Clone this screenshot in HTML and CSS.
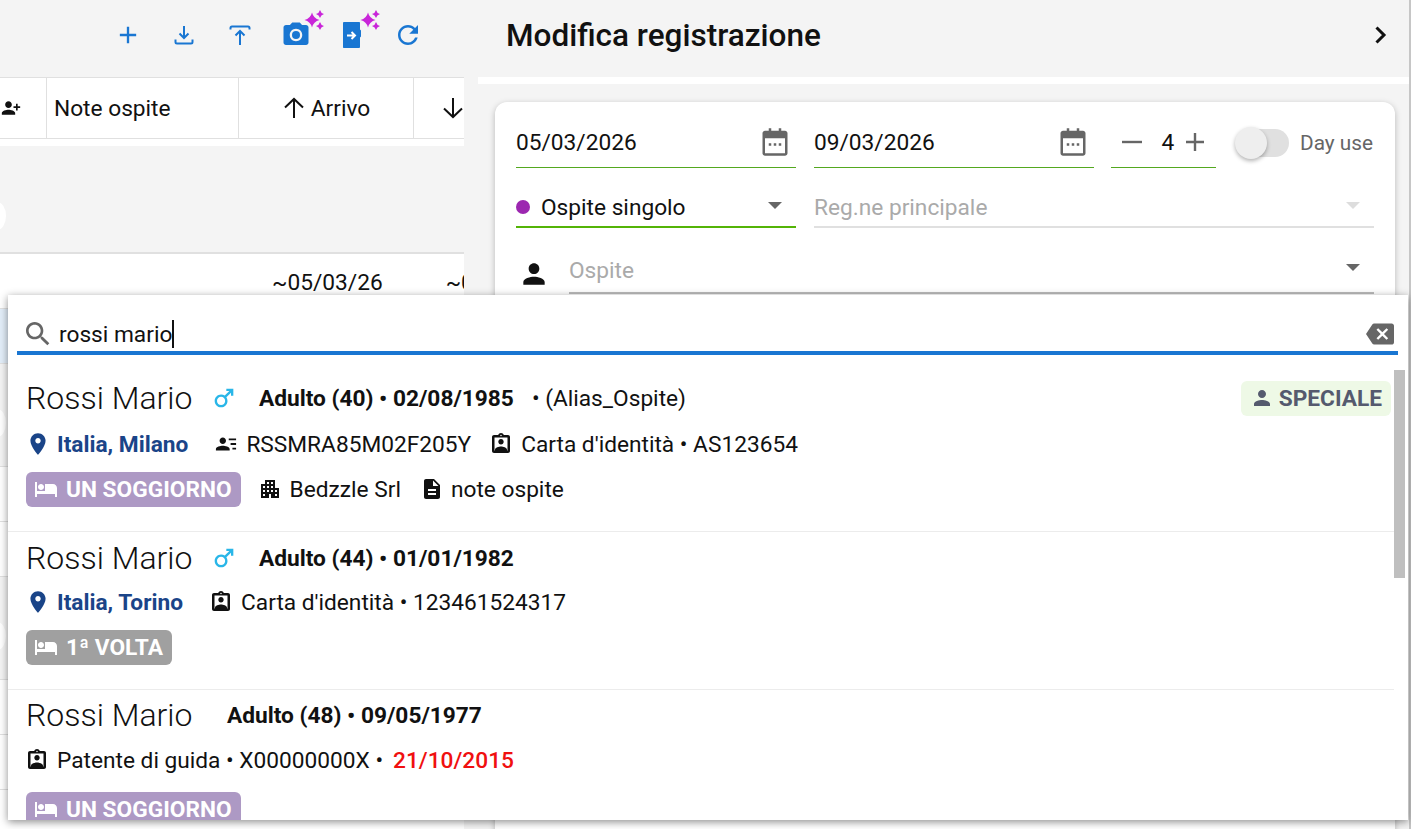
FILE: index.html
```html
<!DOCTYPE html>
<html lang="it">
<head>
<meta charset="utf-8">
<title>Modifica registrazione</title>
<link rel="stylesheet" href="styles.css">
</head>
<body>
<svg class="defs" width="0" height="0" aria-hidden="true">
  <defs>
    <symbol id="i-add" viewBox="0 0 24 24"><path d="M19 13h-6v6h-2v-6H5v-2h6V5h2v6h6v2z"/></symbol>
    <symbol id="i-camera" viewBox="0 0 24 24"><circle cx="12" cy="12" r="3.2"/><path d="M9 2 7.170 4H4c-1.100 0-2 .9-2 2v12c0 1.100.9 2 2 2h16c1.100 0 2-.9 2-2V6c0-1.100-.9-2-2-2h-3.170L15 2H9zm3 15c-2.760 0-5-2.240-5-5s2.240-5 5-5 5 2.240 5 5-2.240 5-5 5z"/></symbol>
    <symbol id="i-refresh" viewBox="0 0 24 24"><path d="M17.650 6.350C16.200 4.900 14.210 4 12 4c-4.420 0-7.990 3.580-7.990 8s3.570 8 7.990 8c3.730 0 6.840-2.550 7.730-6h-2.080c-.82 2.330-3.040 4-5.650 4-3.310 0-6-2.690-6-6s2.690-6 6-6c1.660 0 3.140.69 4.220 1.780L13 11h7V4l-2.350 2.350z"/></symbol>
    <symbol id="i-person" viewBox="0 0 24 24"><path d="M12 12c2.210 0 4-1.790 4-4s-1.790-4-4-4-4 1.790-4 4 1.790 4 4 4zm0 2c-2.670 0-8 1.340-8 4v2h16v-2c0-2.660-5.330-4-8-4z"/></symbol>
    <symbol id="i-person-add" viewBox="0 0 24 24"><path transform="matrix(-1 0 0 1 24 0)" d="M15 12c2.210 0 4-1.790 4-4s-1.790-4-4-4-4 1.790-4 4 1.790 4 4 4zm-9-2V7H4v3H1v2h3v3h2v-3h3v-2H6zm9 4c-2.670 0-8 1.340-8 4v2h16v-2c0-2.660-5.330-4-8-4z"/></symbol>
    <symbol id="i-search" viewBox="0 0 24 24"><path d="M15.500 14h-.79l-.28-.27C15.410 12.590 16 11.110 16 9.500 16 5.910 13.090 3 9.500 3S3 5.910 3 9.500 5.910 16 9.500 16c1.610 0 3.090-.59 4.230-1.570l.27.28v.79l5 4.990L20.490 19l-4.990-5zm-6 0C7.010 14 5 11.990 5 9.500S7.010 5 9.500 5 14 7.010 14 9.500 11.990 14 9.500 14z"/></symbol>
    <symbol id="i-backspace" viewBox="0 0 24 24"><path d="M22 3H7c-.69 0-1.230.35-1.590.88L0 12l5.410 8.110c.36.53.9.89 1.590.89h15c1.100 0 2-.9 2-2V5c0-1.100-.9-2-2-2zm-3 12.590L17.590 17 14 13.410 10.410 17 9 15.590 12.590 12 9 8.410 10.410 7 14 10.590 17.590 7 19 8.410 15.410 12 19 15.590z"/></symbol>
    <symbol id="i-male" viewBox="0 0 24 24"><path d="M9.500 11c1.930 0 3.500 1.570 3.500 3.500S11.430 18 9.500 18 6 16.430 6 14.500 7.570 11 9.500 11zm0-2C6.460 9 4 11.460 4 14.500S6.460 20 9.500 20s5.500-2.460 5.500-5.500c0-1.160-.36-2.250-.97-3.130L18 7.410V10h2V4h-6v2h2.590l-3.960 3.960C11.750 9.360 10.660 9 9.500 9z"/></symbol>
    <symbol id="i-place" viewBox="0 0 24 24"><path d="M12 2C8.130 2 5 5.130 5 9c0 5.250 7 13 7 13s7-7.750 7-13c0-3.870-3.130-7-7-7zm0 9.500c-1.380 0-2.500-1.120-2.500-2.500s1.120-2.500 2.500-2.500 2.500 1.120 2.500 2.500-1.120 2.500-2.500 2.500z"/></symbol>
    <symbol id="i-hotel" viewBox="0 0 24 24"><path d="M7 13c1.660 0 3-1.340 3-3S8.660 7 7 7s-3 1.340-3 3 1.340 3 3 3zm12-6h-8v7H3V5H1v15h2v-3h18v3h2v-9c0-2.210-1.790-4-4-4z"/></symbol>
    <symbol id="i-doc" viewBox="0 0 24 24"><path d="M14 2H6c-1.100 0-1.990.9-1.990 2L4 20c0 1.100.89 2 1.990 2H18c1.100 0 2-.9 2-2V8l-6-6zm2 16H8v-2h8v2zm0-4H8v-2h8v2zm-3-5V3.500L18.500 9H13z"/></symbol>
    <symbol id="i-building" viewBox="0 0 24 24"><path d="M17 11V3H7v4H3v14h8v-4h2v4h8V11h-4zM7 19H5v-2h2v2zm0-4H5v-2h2v2zm0-4H5V9h2v2zm4 4H9v-2h2v2zm0-4H9V9h2v2zm0-4H9V5h2v2zm4 8h-2v-2h2v2zm0-4h-2V9h2v2zm0-4h-2V5h2v2zm4 12h-2v-2h2v2zm0-4h-2v-2h2v2z"/></symbol>
    <symbol id="i-idcard" viewBox="0 0 24 24"><path d="M12 12.500c1.500 0 2.700-1.200 2.700-2.700S13.500 7 12 7 9.300 8.300 9.300 9.800s1.200 2.700 2.700 2.700zm6 6.500H6v-1.400c0-2 4-3.100 6-3.100s6 1.100 6 3.100V19z"/><path fill-rule="evenodd" d="M19 3h-4.180C14.400 1.840 13.300 1 12 1s-2.400.84-2.820 2H5c-1.100 0-2 .9-2 2v14c0 1.100.9 2 2 2h14c1.100 0 2-.9 2-2V5c0-1.100-.9-2-2-2zm-7-.25c.41 0 .75.34.75.75s-.34.75-.75.75-.75-.34-.75-.75.34-.75.75-.75zM18.500 18.500h-13v-13h13v13z"/></symbol>
    <symbol id="i-taxcode" viewBox="0 0 24 24"><path d="M8.500 12c1.930 0 3.500-1.570 3.500-3.500S10.430 5 8.500 5 5 6.570 5 8.500 6.570 12 8.500 12zm0 2C6 14 1 15.200 1 17.500V19h15v-1.500c0-2.300-5-3.500-7.500-3.500zM15 6h8v2h-8V6zm2 5h6v2h-6v-2zm2 5h4v2h-4v-2z"/></symbol>
    <symbol id="i-calendar" viewBox="0 0 24 24"><path fill-rule="evenodd" d="M7 1h2v2h6V1h2v2h3c1 0 2 1 2 2v16c0 1-1 2-2 2H4c-1 0-2-1-2-2V5c0-1 1-2 2-2h3V1zM4 9v12h16V9H4z"/><path d="M7 13h2v2H7zM11 13h2v2h-2zM15 13h2v2h-2z"/></symbol>
    <symbol id="i-sparkles" viewBox="0 0 24 24"><path d="M9 2.500Q10.500 8.500 16.500 10 10.500 11.500 9 17.500 7.500 11.500 1.500 10 7.500 8.500 9 2.500zM17 0Q17.800 3.200 21 4 17.800 4.800 17 8 16.200 4.800 13 4 16.200 3.200 17 0zM17 12Q17.800 15.200 21 16 17.800 16.800 17 20 16.200 16.800 13 16 16.200 15.200 17 12z"/></symbol>
  </defs>
</svg>

<div class="app">
  <section class="left">
    <div class="toolbar">
      <button class="tool"><svg class="ic28 blue"><use href="#i-add"/></svg></button>
      <button class="tool">
        <svg class="ic24 blue-stroke" viewBox="0 0 24 24"><path d="M12 3v12M7.500 10.500 12 15l4.500-4.500M3.500 16.500V19c0 .8.700 1.500 1.500 1.500h14c.8 0 1.500-.7 1.500-1.500v-2.500"/></svg>
      </button>
      <button class="tool">
        <svg class="ic24 blue-stroke" viewBox="0 0 24 24"><path d="M12 22V8M7.500 12.500 12 8l4.500 4.500M2.500 6.500V5c0-.8.700-1.500 1.500-1.500h16c.8 0 1.500.7 1.500 1.500v1.500"/></svg>
      </button>
      <button class="tool ai">
        <svg class="ic30 blue"><use href="#i-camera"/></svg>
        <svg class="spark"><use href="#i-sparkles"/></svg>
      </button>
      <button class="tool ai">
        <svg class="door" viewBox="0 0 20 28"><path class="door-body" d="M2 1h15c.8 0 1 .5 1 1v6.500l1 1v6l-1 1V26c0 .5-.5 1-1 1H2c-.8 0-1-.5-1-1V2c0-.5.500-1 1-1z"/><path class="door-arrow" d="M5 14.500h8M9.500 11l3.500 3.500-3.500 3.500"/></svg>
        <svg class="spark"><use href="#i-sparkles"/></svg>
      </button>
      <button class="tool"><svg class="ic30 blue"><use href="#i-refresh"/></svg></button>
    </div>
    <div class="thead">
      <div class="th th-guest"><svg class="ic20"><use href="#i-person-add"/></svg></div>
      <div class="th th-note">Note ospite</div>
      <div class="th th-date"><svg class="arrow" viewBox="0 0 24 24"><path d="M12 22V3M3 11.500 12 3l9 8.500"/></svg>Arrivo</div>
      <div class="th th-out"><svg class="arrow" viewBox="0 0 24 24"><path d="M12 2v19M3 12.500l9 8.500 9-8.500"/></svg></div>
    </div>
    <div class="thead-foot"></div>
    <div class="group-gap"><span class="pill"></span></div>
    <div class="trow">
      <span class="cell-a">~05/03/26</span>
      <span class="cell-b">~09/03/26</span>
    </div>
    <div class="trow selected"></div>
    <div class="group-gap second"><span class="pill"></span></div>
    <div class="trow"></div>
    <div class="trow"></div>
    <div class="group-gap second"><span class="pill"></span></div>
    <div class="trow"></div>
    <div class="trow"></div>
    <div class="trow"></div>
  </section>

  <section class="right">
    <header class="right-head">
      <h1>Modifica registrazione</h1>
      <svg class="chev" viewBox="0 0 24 24"><path d="M8.500 4.500 16 12l-7.500 7.500"/></svg>
    </header>
    <div class="right-sep"></div>
    <div class="card">
      <div class="form-row dates">
        <div class="field date"><span>05/03/2026</span><svg class="cal"><use href="#i-calendar"/></svg></div>
        <div class="field date"><span>09/03/2026</span><svg class="cal"><use href="#i-calendar"/></svg></div>
        <div class="field stepper">
          <svg class="step" viewBox="0 0 24 24"><path d="M2 12h20"/></svg>
          <span class="count">4</span>
          <svg class="step" viewBox="0 0 24 24"><path d="M3 12h18M12 3v18"/></svg>
        </div>
        <div class="toggle"><span class="track"><span class="thumb"></span></span><span class="toggle-label">Day use</span></div>
      </div>
      <div class="form-row types">
        <div class="select active"><span class="dot"></span><span class="sel-text">Ospite singolo</span><span class="caret"></span></div>
        <div class="select muted"><span class="sel-text">Reg.ne principale</span><span class="caret"></span></div>
      </div>
      <div class="form-row guest">
        <svg class="person"><use href="#i-person"/></svg>
        <div class="select guest-sel"><span class="sel-text">Ospite</span><span class="caret dark"></span></div>
      </div>
    </div>
  </section>
</div>

<div class="dialog">
  <div class="search">
    <svg class="ic32 grey"><use href="#i-search"/></svg>
    <span class="query">rossi mario</span><span class="caretline"></span>
    <svg class="ic28 clear"><use href="#i-backspace"/></svg>
  </div>
  <div class="results">
    <article class="row r1">
      <div class="line">
        <span class="name">Rossi Mario</span>
        <svg class="ic28 male"><use href="#i-male"/></svg>
        <b class="age">Adulto (40) • 02/08/1985</b>
        <span class="alias">• (Alias_Ospite)</span>
        <span class="tag"><svg class="ic24"><use href="#i-person"/></svg>SPECIALE</span>
      </div>
      <div class="line gap10">
        <svg class="pin"><use href="#i-place"/></svg>
        <b class="city">Italia, Milano</b>
        <svg class="tax"><use href="#i-taxcode"/></svg>
        <span class="txt">RSSMRA85M02F205Y</span>
        <svg class="ic24 doc"><use href="#i-idcard"/></svg>
        <span class="txt">Carta d'identità • AS123654</span>
      </div>
      <div class="line gap9">
        <span class="stay purple"><svg class="ic24"><use href="#i-hotel"/></svg>UN SOGGIORNO</span>
        <svg class="ic24 bld"><use href="#i-building"/></svg>
        <span class="txt">Bedzzle Srl</span>
        <svg class="ic24 note"><use href="#i-doc"/></svg>
        <span class="txt">note ospite</span>
      </div>
    </article>
    <article class="row r2">
      <div class="line">
        <span class="name">Rossi Mario</span>
        <svg class="ic28 male"><use href="#i-male"/></svg>
        <b class="age">Adulto (44) • 01/01/1982</b>
      </div>
      <div class="line gap8">
        <svg class="pin"><use href="#i-place"/></svg>
        <b class="city">Italia, Torino</b>
        <svg class="ic24 doc after-city"><use href="#i-idcard"/></svg>
        <span class="txt">Carta d'identità • 123461524317</span>
      </div>
      <div class="line gap9">
        <span class="stay grey-bg"><svg class="ic24"><use href="#i-hotel"/></svg>1ª VOLTA</span>
      </div>
    </article>
    <article class="row r3">
      <div class="line">
        <span class="name">Rossi Mario</span>
        <b class="age nomale">Adulto (48) • 09/05/1977</b>
      </div>
      <div class="line gap9">
        <svg class="ic24 doc first"><use href="#i-idcard"/></svg>
        <span class="txt">Patente di guida • X00000000X •</span>
        <b class="expired">21/10/2015</b>
      </div>
      <div class="line gap13">
        <span class="stay purple"><svg class="ic24"><use href="#i-hotel"/></svg>UN SOGGIORNO</span>
      </div>
    </article>
    <div class="scrollbar"></div>
  </div>
</div>
</body>
</html>
```

FILE: styles.css
```css
* { box-sizing: border-box; }
html, body { margin: 0; height: 100%; overflow: hidden; }
body { font-family: Roboto, "Liberation Sans", sans-serif; font-size: 22.7px; color: #111; background: #f4f4f4; }
svg { fill: currentColor; flex: none; display: block; }
.defs { position: absolute; }
button { border: 0; background: none; padding: 0; color: inherit; }

.ic20 { width: 20px; height: 20px; }
.ic24 { width: 24px; height: 24px; }
.ic28 { width: 28px; height: 28px; }
.ic30 { width: 30px; height: 30px; }
.ic32 { width: 32px; height: 32px; }
.blue { color: #1976d2; }
.blue-stroke { fill: none; stroke: #1976d2; stroke-width: 2; }

.app { display: flex; height: 829px; }

/* left */
.left { width: 464px; flex: none; overflow: hidden; }
.toolbar { height: 77px; display: flex; justify-content: flex-end; padding: 0 28px 7px 0; align-items: center; }
.tool { width: 56px; height: 40px; display: flex; align-items: center; justify-content: center; position: relative; }
.spark { position: absolute; width: 24px; height: 24px; left: 35px; top: -5px; color: #c925d9; }
.door { width: 20px; height: 28px; }
.door-body { fill: #1976d2; }
.door-arrow { fill: none; stroke: #fff; stroke-width: 2; }
.thead { height: 62px; display: flex; background: #fff; border-top: 1px solid #e0e0e0; border-bottom: 1px solid #e0e0e0; }
.th { display: flex; align-items: center; border-right: 1px solid #e0e0e0; flex: none; }
.th-guest { width: 47px; padding-left: 1px; }
.th-note { width: 192px; padding-left: 7px; }
.th-date { width: 175px; justify-content: center; gap: 5px; }
.th-out { width: 100px; border-right: 0; padding-left: 27px; }
.arrow { width: 24px; height: 24px; fill: none; stroke: #111; stroke-width: 2; }
.thead-foot { height: 7px; background: #fff; }
.group-gap { height: 108px; border-bottom: 2px solid #e0e0e0; position: relative; }
.group-gap.second { height: 103px; border-bottom-width: 1px; }
.pill { position: absolute; left: -12px; top: 56px; width: 18px; height: 28px; border-radius: 50%; background: #fff; }
.group-gap.second .pill { top: 45px; }
.trow { height: 55px; background: #fff; display: flex; padding-top: 15px; border-bottom: 1px solid #e0e0e0; }
.trow.selected { background: #e3eef9; }
.cell-a { margin-left: 272px; }
.cell-b { margin-left: 63px; }

/* right */
.right { flex: 1; min-width: 0; margin-left: 14px; border-right: 2px solid #c6c6c6; display: flex; flex-direction: column; overflow: hidden; }
.right-head { flex: none; height: 77px; display: flex; align-items: center; justify-content: space-between; padding: 0 17px 7px 28px; }
.right-head h1 { margin: 0; font-size: 31.5px; font-weight: 500; }
.chev { width: 24px; height: 24px; fill: none; stroke: #111; stroke-width: 3; }
.right-sep { flex: none; height: 7px; background: #fff; }
.card { margin: 18px 14px 0 17px; background: #fff; border-radius: 12px; padding: 21px 21px 0 21px; box-shadow: 0 2px 6px rgba(0,0,0,.25); height: 780px; flex: none; }
.form-row { display: flex; }
.dates { gap: 18px; height: 45px; }
.field { display: flex; align-items: center; border-bottom: 1px solid #53a81f; height: 45px; padding-bottom: 6px; }
.date { width: 280px; justify-content: space-between; padding-right: 6px; }
.cal { width: 30px; height: 32px; color: #666; }
.stepper { width: 105px; margin-left: -1px; justify-content: space-between; padding: 0 9px 6px; }
.count { margin-left: 9px; }
.step { width: 24px; height: 24px; fill: none; stroke: #666; stroke-width: 2.400; }
.toggle { display: flex; align-items: center; height: 40px; margin-left: 5px; }
.track { width: 50px; height: 28px; background: #e0e0e0; border-radius: 14px; display: block; position: relative; }
.thumb { position: absolute; width: 32px; height: 32px; left: -4px; top: -2px; border-radius: 50%; background: #eee; box-shadow: 0 2px 4px rgba(0,0,0,.3); }
.toggle-label { font-size: 20.8px; color: #666; margin-left: 11px; }
.types { margin-top: 16px; gap: 18px; height: 44px; }
.select { display: flex; align-items: center; height: 44px; padding-top: 4px; position: relative; }
.active { width: 280px; border-bottom: 2px solid #53b406; }
.dot { width: 14px; height: 14px; border-radius: 50%; background: #9c27b0; margin-right: 11px; }
.muted { flex: 1; border-bottom: 2px solid #e0e0e0; color: #aaa; }
.caret { position: absolute; right: 14px; top: 18px; width: 0; height: 0; border: 7px solid transparent; border-top: 7px solid #666; border-bottom: 0; }
.muted .caret { border-top-color: #ddd; }
.guest { margin-top: 18px; gap: 19px; }
.person { width: 32px; height: 32px; margin: 12px 0 0 2px; color: #111; }
.guest-sel { flex: 1; color: #aaa; border-bottom: 2px solid #bbb; height: 48px; padding-top: 2px; }
.caret.dark { top: 18px; }

/* dialog */
.dialog { position: absolute; left: 8px; top: 295px; width: 1400px; height: 525px; background: #fff; box-shadow: 0 2px 8px rgba(0,0,0,.45); overflow: hidden; display: flex; flex-direction: column; }
.search { flex: none; margin: 0 10px 0 9px; height: 60px; border-bottom: 4px solid #1976d2; display: flex; align-items: center; padding: 22px 4px 0 5px; }
.grey { color: #666; }
.ic32.grey { margin-right: 5px; }
.caretline { width: 2px; height: 28px; background: #111; }
.clear { margin-left: auto; color: #666; }
.results { position: relative; flex: 1; overflow: hidden; padding-top: 15px; }
.scrollbar { position: absolute; right: 3px; top: 15px; width: 11px; height: 208px; background: #bfbfbf; }
.row { width: 1386px; padding-left: 18px; border-bottom: 1px solid #ececec; }
.r1 { padding-top: 10px; padding-bottom: 24px; }
.r2 { padding-top: 8px; padding-bottom: 24px; }
.r3 { padding-top: 7px; border-bottom: 0; }
.line { height: 36px; display: flex; align-items: center; white-space: nowrap; }
.gap8 { margin-top: 8px; }
.gap9 { margin-top: 9px; }
.gap10 { margin-top: 10px; }
.gap13 { margin-top: 13px; }
.name { font-size: 32px; font-weight: 300; width: 165px; }
.male { color: #29b6e8; margin-left: 19px; }
.age { font-weight: 700; margin-left: 21px; }
.nomale { margin-left: 36px; }
.alias { margin-left: 18px; }
.tag { margin-left: auto; margin-right: 3px; height: 35px; background: #eef9e6; border-radius: 6px; color: #555a6e; font-weight: 700; display: flex; align-items: center; padding: 0 9px; gap: 5px; }
.pin { width: 26px; height: 26px; color: #1a4488; margin: 0 6px 0 -1px; }
.city { color: #1a4488; font-weight: 700; }
.tax { width: 22px; height: 22px; margin: 0 9px 0 27px; }
.doc { margin: 0 8px 0 18px; }
.doc.after-city { margin-left: 26px; }
.doc.first { margin-left: -1px; }
.expired { color: #f01010; margin-left: 10px; font-weight: 500; }
.stay { height: 35px; border-radius: 6px; color: #fff; font-weight: 700; display: flex; align-items: center; padding: 0 9px 0 8px; gap: 8px; }
.purple { background: #ad99c4; }
.grey-bg { background: #a0a0a0; }
.bld { margin: 0 8px 0 17px; }
.note { margin: 0 7px 0 19px; }
```
